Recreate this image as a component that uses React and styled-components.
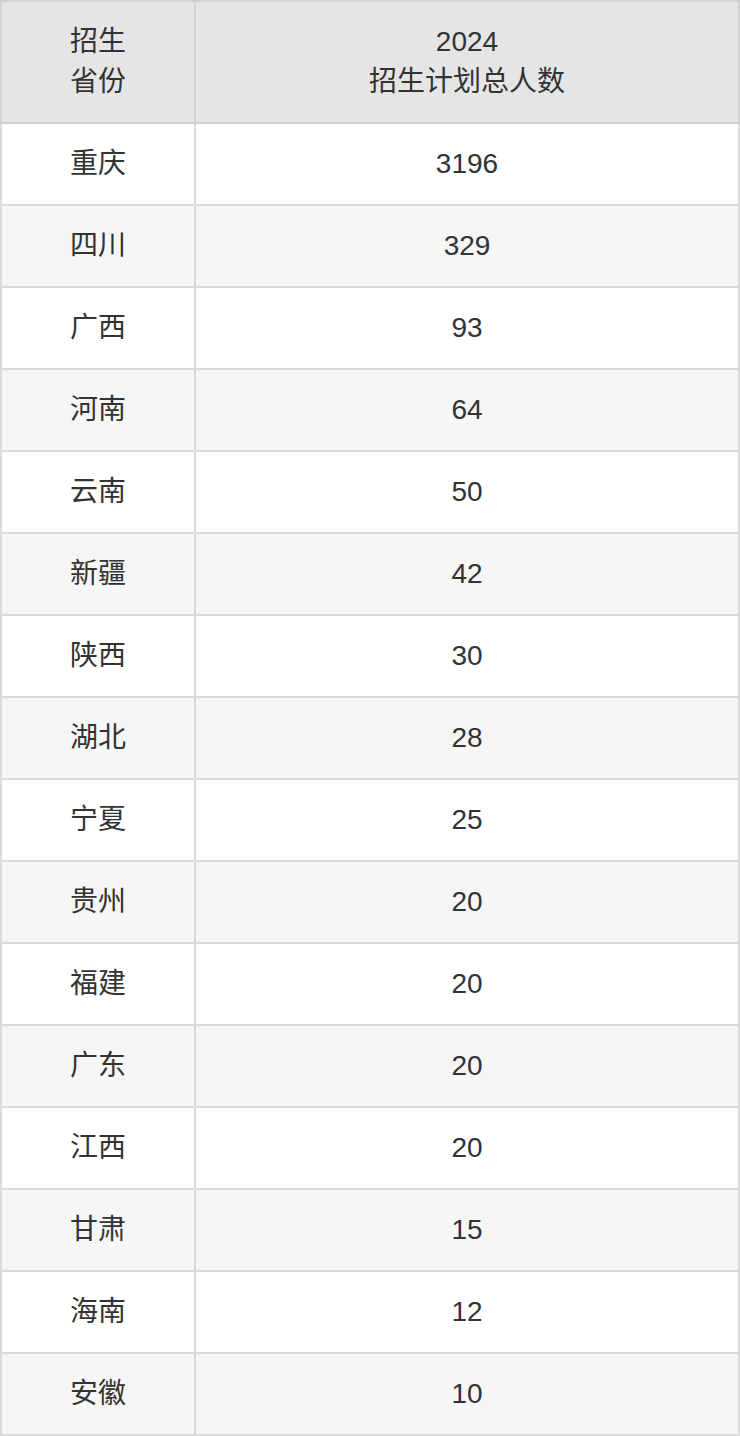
import React from 'react';
import styled, { createGlobalStyle } from 'styled-components';

const GlobalStyle = createGlobalStyle`
  html, body {
    margin: 0;
    padding: 0;
    background: #fff;
  }
  body {
    font-family: "Liberation Sans", "Noto Sans CJK SC", sans-serif;
  }
`;

const Table = styled.table`
  width: 740px;
  border-collapse: collapse;
  table-layout: fixed;
  color: #333;
  font-size: 28px;
  line-height: 40px;
`;

const HeadCell = styled.th`
  font-weight: normal;
  background: #e5e5e5;
  border: 2px solid #d2d2d2;
  padding: 20px 0;
  height: 80px;
  text-align: center;
  width: ${(p) => p.w};
`;

const Row = styled.tr`
  background: ${(p) => (p.striped ? '#f6f6f6' : '#fff')};
`;

const Cell = styled.td`
  border: 2px solid #dadada;
  padding: 20px 0;
  height: 40px;
  text-align: center;
`;

const rows = [
  ['重庆', '3196'],
  ['四川', '329'],
  ['广西', '93'],
  ['河南', '64'],
  ['云南', '50'],
  ['新疆', '42'],
  ['陕西', '30'],
  ['湖北', '28'],
  ['宁夏', '25'],
  ['贵州', '20'],
  ['福建', '20'],
  ['广东', '20'],
  ['江西', '20'],
  ['甘肃', '15'],
  ['海南', '12'],
  ['安徽', '10'],
];

const App = () => (
  <>
    <GlobalStyle />
    <Table>
      <thead>
        <tr>
          <HeadCell w="192px">
            招生
            <br />
            省份
          </HeadCell>
          <HeadCell>
            2024
            <br />
            招生计划总人数
          </HeadCell>
        </tr>
      </thead>
      <tbody>
        {rows.map(([prov, num], i) => (
          <Row key={prov + i} striped={i % 2 === 1}>
            <Cell>{prov}</Cell>
            <Cell>{num}</Cell>
          </Row>
        ))}
      </tbody>
    </Table>
  </>
);

export default App;
